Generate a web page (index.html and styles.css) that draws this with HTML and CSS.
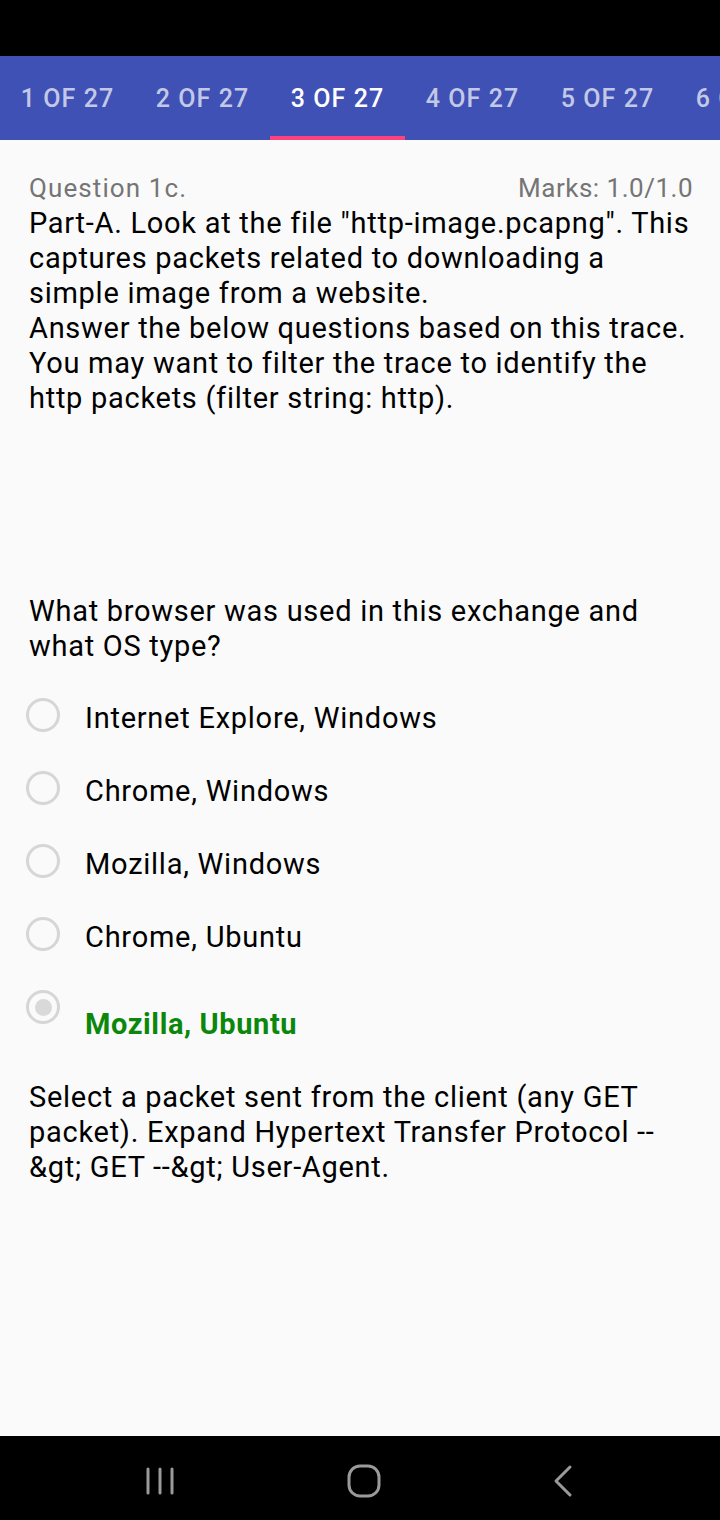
FILE: index.html
```html
<!DOCTYPE html>
<html>
<head>
<meta charset="utf-8">
<link rel="stylesheet" href="styles.css">
</head>
<body>
<div class="screen">
  <div class="statusbar"></div>
  <div class="tabs">
    <div class="tab">1 OF 27</div>
    <div class="tab">2 OF 27</div>
    <div class="tab active">3 OF 27</div>
    <div class="tab">4 OF 27</div>
    <div class="tab">5 OF 27</div>
    <div class="tab">6 OF 27</div>
  </div>
  <div class="content">
    <div class="qhead">
      <span class="qnum">Question 1c.</span>
      <span class="marks">Marks: 1.0/1.0</span>
    </div>
    <p class="text">Part-A. Look at the file "http-image.pcapng". This captures packets related to downloading a simple image from a website.<br>Answer the below questions based on this trace. You may want to filter the trace to identify the http packets (filter string: http).</p>
    <p class="text question">What browser was used in this exchange and what OS type?</p>
    <div class="options">
      <div class="option"><span class="radio"></span><span class="label">Internet Explore, Windows</span></div>
      <div class="option"><span class="radio"></span><span class="label">Chrome, Windows</span></div>
      <div class="option"><span class="radio"></span><span class="label">Mozilla, Windows</span></div>
      <div class="option"><span class="radio"></span><span class="label">Chrome, Ubuntu</span></div>
      <div class="option correct"><span class="radio checked"></span><span class="label">Mozilla, Ubuntu</span></div>
    </div>
    <p class="text next">Select a packet sent from the client (any GET packet). Expand Hypertext Transfer Protocol --&amp;gt; GET --&amp;gt; User-Agent.</p>
  </div>
  <div class="navbar">
    <svg class="nav-icon" width="30" height="32" viewBox="0 0 30 32"><g stroke="#9a9a9a" stroke-width="3" stroke-linecap="round"><line x1="3" y1="4" x2="3" y2="28"/><line x1="15" y1="4" x2="15" y2="28"/><line x1="27" y1="4" x2="27" y2="28"/></g></svg>
    <svg class="nav-icon" width="34" height="34" viewBox="0 0 34 34"><rect x="2" y="2" width="30" height="30" rx="11" fill="none" stroke="#9a9a9a" stroke-width="3"/></svg>
    <svg class="nav-icon" width="24" height="34" viewBox="0 0 24 34"><polyline points="18,3 4,17 18,31" fill="none" stroke="#9a9a9a" stroke-width="3" stroke-linecap="round" stroke-linejoin="round"/></svg>
  </div>
</div>
</body>
</html>
```

FILE: styles.css
```css
html, body {
  margin: 0;
  padding: 0;
}
body {
  width: 720px;
  height: 1520px;
  font-family: Roboto, "Liberation Sans", sans-serif;
  background: #000;
  overflow: hidden;
}
.screen {
  display: flex;
  flex-direction: column;
  height: 1520px;
}
.statusbar {
  height: 56px;
  background: #000;
  flex-shrink: 0;
}
.tabs {
  height: 84px;
  background: #3f51b5;
  display: flex;
  overflow: hidden;
  flex-shrink: 0;
}
.tab {
  flex: 0 0 135px;
  display: flex;
  align-items: center;
  justify-content: center;
  font-size: 25px;
  letter-spacing: 1.1px;
  font-weight: 500;
  color: rgba(255, 255, 255, 0.7);
  white-space: nowrap;
  box-sizing: border-box;
  padding-top: 1px;
}
.tab.active {
  color: #fff;
  border-bottom: 4px solid #ff4081;
  padding-top: 5px;
}
.content {
  flex: 1;
  background: #fafafa;
  padding: 31px 28px 0 29px;
  color: #000;
}
.qhead {
  display: flex;
  justify-content: space-between;
  font-size: 26px;
  line-height: 35px;
  color: #757575;
}
.qnum {
  letter-spacing: 1.1px;
}
.marks {
  letter-spacing: 0.5px;
  margin-right: -1px;
}
.text {
  margin: 0;
  font-size: 29px;
  letter-spacing: 0.72px;
  line-height: 35px;
}
.question {
  margin-top: 178px;
}
.options {
  margin-left: -3px;
  margin-top: 16px;
}
.option {
  display: flex;
  align-items: flex-start;
  height: 73px;
}
.radio {
  width: 34px;
  height: 34px;
  box-sizing: border-box;
  border: 3px solid #d6d6d6;
  border-radius: 50%;
  margin-top: 18px;
  flex-shrink: 0;
  display: flex;
  align-items: center;
  justify-content: center;
}
.radio.checked::after {
  content: "";
  width: 17px;
  height: 17px;
  border-radius: 50%;
  background: #d9d9d9;
}
.label {
  margin-left: 25px;
  margin-top: 21px;
  font-size: 29px;
  letter-spacing: 0.75px;
  line-height: 35px;
  color: #000;
}
.option.correct {
  height: auto;
}
.option.correct .label {
  margin-top: 35px;
  color: #0b870b;
  font-weight: 700;
  letter-spacing: 0.6px;
}
.next {
  margin-top: 38px;
}
.navbar {
  height: 84px;
  flex-shrink: 0;
  background: #000;
  display: flex;
  align-items: center;
  justify-content: space-between;
  padding: 5px 144px 0 145px;
  box-sizing: border-box;
}
```
